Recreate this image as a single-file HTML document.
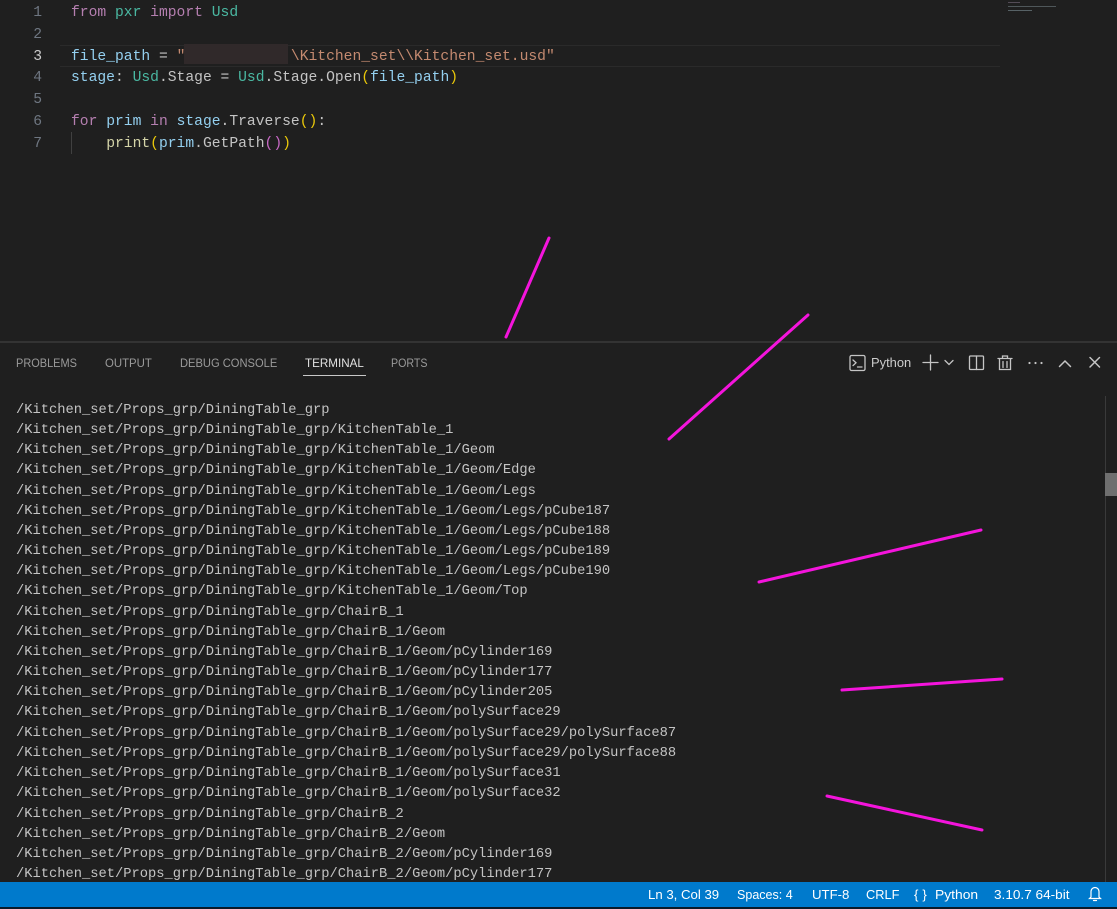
<!DOCTYPE html>
<html><head><meta charset="utf-8"><style>
html,body{margin:0;padding:0;background:#1f1f1f}
#r{position:relative;width:1117px;height:909px;overflow:hidden;background:#1f1f1f;font-family:"Liberation Mono",monospace}
.n,.c,.t,.tab,.s{position:absolute;white-space:pre;filter:blur(.25px)}
.n{left:20px;width:22px;text-align:right;font-size:14.67px;line-height:22px;color:#6e7681}
.c{left:71px;font-size:14.67px;line-height:22px;color:#c4c4c4}
.t{left:16px;font-size:13.75px;line-height:20px;color:#c4c4c4}
.tab{top:355px;font:12.4px/16px "Liberation Sans",sans-serif;color:#9a9a9a;transform-origin:left center}
.s{top:887px;font:13.2px/16px "Liberation Sans",sans-serif;color:#fff;transform-origin:left center}
.k{color:#b57fb0}.v{color:#94d0f0}.g{color:#4ab8a2}.y{color:#eac80a}.f{color:#d4d4a8}.o{color:#c48a70}.p{color:#c868c6}
svg{position:absolute;left:0;top:0}
</style></head><body><div id="r">
<div style="position:absolute;left:60px;top:45px;width:940px;height:20px;border-top:1px solid #2a2a2a;border-bottom:1px solid #2a2a2a"></div>
<div style="position:absolute;left:71px;top:132px;width:1px;height:22px;background:#404040"></div>
<div class="n" style="top:2px">1</div><div class="n" style="top:24px">2</div><div class="n" style="top:46px;color:#ccc">3</div><div class="n" style="top:67px">4</div><div class="n" style="top:89px">5</div><div class="n" style="top:111px">6</div><div class="n" style="top:133px">7</div>
<div class="c" style="top:2px"><span class="k">from</span> <span class="g">pxr</span> <span class="k">import</span> <span class="g">Usd</span></div>
<div class="c" style="top:46px"><span class="v">file_path</span> = <span class="o">"            \Kitchen_set\\Kitchen_set.usd"</span></div>
<div style="position:absolute;left:184px;top:44px;width:104px;height:20px;background:#30292a"></div>
<div class="c" style="top:67px"><span class="v">stage</span>: <span class="g">Usd</span>.Stage = <span class="g">Usd</span>.Stage.Open<span class="y">(</span><span class="v">file_path</span><span class="y">)</span></div>
<div class="c" style="top:111px"><span class="k">for</span> <span class="v">prim</span> <span class="k">in</span> <span class="v">stage</span>.Traverse<span class="y">()</span>:</div>
<div class="c" style="top:133px">    <span class="f">print</span><span class="y">(</span><span class="v">prim</span>.GetPath<span class="p">()</span><span class="y">)</span></div>
<div style="position:absolute;left:1008px;top:1px;width:50px;height:12px;opacity:.5"><div style="height:1px;width:12px;margin-top:1px;background:#8a7a90"></div><div style="height:1px;width:48px;margin-top:3px;background:#7f8f95"></div><div style="height:1px;width:24px;margin-top:3px;background:#8fa5ad"></div></div>
<div style="position:absolute;left:0;top:341px;width:1117px;height:2px;background:#333"></div>
<div class="tab" style="left:16px;transform:scaleX(.885)">PROBLEMS</div><div class="tab" style="left:105px;transform:scaleX(.92)">OUTPUT</div><div class="tab" style="left:180px;transform:scaleX(.9)">DEBUG CONSOLE</div><div class="tab" style="left:305px;color:#e0e0e0;transform:scaleX(.94)">TERMINAL</div><div class="tab" style="left:391px;transform:scaleX(.86)">PORTS</div>
<div style="position:absolute;left:303px;top:375px;width:63px;height:1px;background:#c8c8c8"></div>
<div class="t" style="top:401px">/Kitchen_set/Props_grp/DiningTable_grp</div>
<div class="t" style="top:421px">/Kitchen_set/Props_grp/DiningTable_grp/KitchenTable_1</div>
<div class="t" style="top:441px">/Kitchen_set/Props_grp/DiningTable_grp/KitchenTable_1/Geom</div>
<div class="t" style="top:461px">/Kitchen_set/Props_grp/DiningTable_grp/KitchenTable_1/Geom/Edge</div>
<div class="t" style="top:482px">/Kitchen_set/Props_grp/DiningTable_grp/KitchenTable_1/Geom/Legs</div>
<div class="t" style="top:502px">/Kitchen_set/Props_grp/DiningTable_grp/KitchenTable_1/Geom/Legs/pCube187</div>
<div class="t" style="top:522px">/Kitchen_set/Props_grp/DiningTable_grp/KitchenTable_1/Geom/Legs/pCube188</div>
<div class="t" style="top:542px">/Kitchen_set/Props_grp/DiningTable_grp/KitchenTable_1/Geom/Legs/pCube189</div>
<div class="t" style="top:562px">/Kitchen_set/Props_grp/DiningTable_grp/KitchenTable_1/Geom/Legs/pCube190</div>
<div class="t" style="top:582px">/Kitchen_set/Props_grp/DiningTable_grp/KitchenTable_1/Geom/Top</div>
<div class="t" style="top:603px">/Kitchen_set/Props_grp/DiningTable_grp/ChairB_1</div>
<div class="t" style="top:623px">/Kitchen_set/Props_grp/DiningTable_grp/ChairB_1/Geom</div>
<div class="t" style="top:643px">/Kitchen_set/Props_grp/DiningTable_grp/ChairB_1/Geom/pCylinder169</div>
<div class="t" style="top:663px">/Kitchen_set/Props_grp/DiningTable_grp/ChairB_1/Geom/pCylinder177</div>
<div class="t" style="top:683px">/Kitchen_set/Props_grp/DiningTable_grp/ChairB_1/Geom/pCylinder205</div>
<div class="t" style="top:703px">/Kitchen_set/Props_grp/DiningTable_grp/ChairB_1/Geom/polySurface29</div>
<div class="t" style="top:724px">/Kitchen_set/Props_grp/DiningTable_grp/ChairB_1/Geom/polySurface29/polySurface87</div>
<div class="t" style="top:744px">/Kitchen_set/Props_grp/DiningTable_grp/ChairB_1/Geom/polySurface29/polySurface88</div>
<div class="t" style="top:764px">/Kitchen_set/Props_grp/DiningTable_grp/ChairB_1/Geom/polySurface31</div>
<div class="t" style="top:784px">/Kitchen_set/Props_grp/DiningTable_grp/ChairB_1/Geom/polySurface32</div>
<div class="t" style="top:805px">/Kitchen_set/Props_grp/DiningTable_grp/ChairB_2</div>
<div class="t" style="top:825px">/Kitchen_set/Props_grp/DiningTable_grp/ChairB_2/Geom</div>
<div class="t" style="top:845px">/Kitchen_set/Props_grp/DiningTable_grp/ChairB_2/Geom/pCylinder169</div>
<div class="t" style="top:865px">/Kitchen_set/Props_grp/DiningTable_grp/ChairB_2/Geom/pCylinder177</div>
<div style="position:absolute;left:1105px;top:396px;width:1px;height:486px;background:#3a3a3a"></div>
<div style="position:absolute;left:1105px;top:473px;width:12px;height:23px;background:#6f6f6f"></div>
<div style="position:absolute;left:0;top:882px;width:1117px;height:25px;background:#007acc"></div>
<div style="position:absolute;left:0;top:907px;width:1117px;height:2px;background:#0a1a28"></div>
<div class="s" style="left:648px">Ln 3, Col 39</div><div class="s" style="left:737px;transform:scaleX(.95)">Spaces: 4</div><div class="s" style="left:812px">UTF-8</div><div class="s" style="left:866px;transform:scaleX(.97)">CRLF</div><div class="s" style="left:914px;letter-spacing:4px">{}</div><div class="s" style="left:935px;transform:scaleX(1.05)">Python</div><div class="s" style="left:994px;transform:scaleX(1.03)">3.10.7 64-bit</div>
<div class="tab" style="left:871px;color:#ccc;font-size:13.2px;transform:scaleX(.98)">Python</div>
<svg width="1117" height="909" fill="none" stroke-linecap="round">
<g stroke="#c5c5c5" stroke-width="1.3">
<rect x="850" y="355.500" width="15" height="15" rx="1.500"/><path d="M853 360l3 2.800-3 2.800M857.500 367h4.500"/>
<path d="M930.500 355v15M923 362.500h15"/><path d="M945 360.500l4 4 4-4"/>
<rect x="969.500" y="356" width="14" height="13.500" rx="1"/><path d="M976.500 356v13.500"/>
<path d="M998 358.500h14M1002.500 358v-2h5v2M999.500 359v10.500h11V359M1003 361.500v6M1007 361.500v6"/>
<path d="M1059.500 366.500l5.500-5.500 5.500 5.500" stroke-width="1.500"/><path d="M1090 357.500l9.500 9.500M1099.500 357.500l-9.500 9.500" stroke-width="1.500"/>
</g>
<g fill="#c5c5c5"><circle cx="1029.500" cy="363" r="1.100"/><circle cx="1035.500" cy="363" r="1.100"/><circle cx="1041.500" cy="363" r="1.100"/></g>
<path d="M1091 897v-5.500a4 4 0 0 1 8 0V897l1.500 1.500h-11zM1093.500 900.500h3" stroke="#fff" stroke-width="1.200"/>
<g stroke="#f414dc" stroke-width="3">
<path d="M506 337L549 238M669 439L808 315M759 582L981 530M842 690L1002 679M827 796L982 830"/>
</g>
</svg>
</div></body></html>
